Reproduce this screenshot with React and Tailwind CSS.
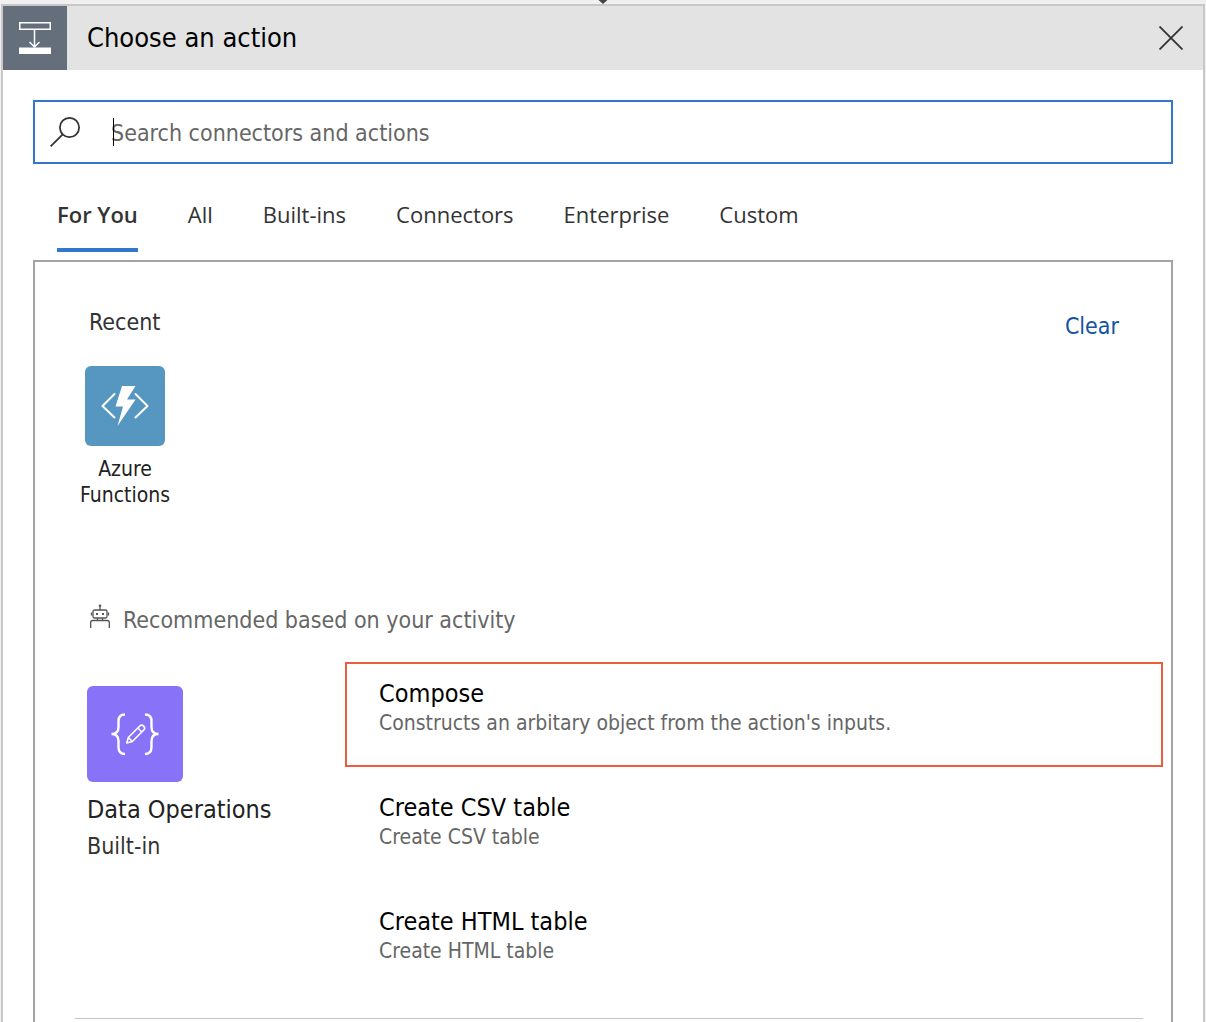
import { useState } from "react";

const tabs = ["For You", "All", "Built-ins", "Connectors", "Enterprise", "Custom"];

const actions = [
  { title: "Compose", description: "Constructs an arbitary object from the action's inputs.", highlighted: true },
  { title: "Create CSV table", description: "Create CSV table" },
  { title: "Create HTML table", description: "Create HTML table" },
];

function InsertStepIcon() {
  return (
    <svg width="32" height="32" viewBox="0 0 32 32" fill="none" stroke="#fff" aria-hidden="true">
      <rect x="0.75" y="0.75" width="30.5" height="6.5" strokeWidth="1.5" />
      <path d="M15.5 8v17M10.5 20l5 5 5-5" strokeWidth="1.5" />
      <path d="M0 25.5h32V32H0z" fill="#fff" stroke="none" />
    </svg>
  );
}

function CloseIcon() {
  return (
    <svg width="24" height="24" viewBox="0 0 24 24" stroke="#333" strokeWidth="1.8" aria-hidden="true">
      <path d="M0.5 0.5l23 23M23.5 0.5l-23 23" />
    </svg>
  );
}

function SearchIcon() {
  return (
    <svg width="30" height="30" viewBox="0 0 30 30" fill="none" stroke="#333" strokeWidth="1.8" aria-hidden="true">
      <circle cx="19.5" cy="10.5" r="9.6" />
      <path d="M12.7 17.3L0.6 29.4" />
    </svg>
  );
}

function FunctionsIcon() {
  return (
    <svg width="80" height="80" viewBox="0 0 80 80" fill="none" aria-hidden="true">
      <path d="M29.5 28L17.5 40l12 11.5M50.5 28L62.5 40l-12 11.5" stroke="#fff" strokeWidth="2" strokeLinecap="round" strokeLinejoin="round" />
      <path d="M37 20h13.5L42 33.500h8.500L32.500 60l5.500-19.500h-7.500z" fill="#fff" />
    </svg>
  );
}

function DataOperationsIcon() {
  return (
    <svg width="96" height="96" viewBox="0 0 96 96" fill="none" stroke="#fff" aria-hidden="true">
      <path
        d="M38 28.5c-5 0-6.500 2.500-6.500 6.500v6c0 4-2 7-7 7 5 0 7 3 7 7v6c0 4 1.500 7 6.500 7M58 28.500c5 0 6.500 2.500 6.500 6.500v6c0 4 2 7 7 7-5 0-7 3-7 7v6c0 4-1.500 7-6.500 7"
        strokeWidth="2.4"
      />
      <path d="M39.8 57l1.500-5.500 11.500-11.500c2.500-2.500 6.500 1.500 4 4L45.300 55.500zM41.300 51.500l4 4M50.800 42l4 4" strokeWidth="1.6" strokeLinejoin="round" />
    </svg>
  );
}

function RobotIcon() {
  return (
    <svg width="20" height="24" viewBox="0 0 20 24" fill="none" stroke="#555" strokeWidth="1.3" aria-hidden="true">
      <rect x="3" y="6" width="14" height="8" rx="1.5" />
      <path d="M10 1.500v5M1.500 8.500v3M18.500 8.500v3M7.500 14v2.500M12.500 14v2.500M0.700 24v-5.500q0-2 2-2h14.600q2 0 2 2V24" />
      <circle cx="10" cy="1.8" r="1.3" fill="#555" stroke="none" />
      <path d="M6 9h2v2H6zM12 9h2v2h-2z" fill="#555" stroke="none" />
    </svg>
  );
}

export default function App() {
  const [active, setActive] = useState("For You");
  const [query, setQuery] = useState("");

  return (
    <div className="flex min-h-screen flex-col bg-[#f0f0f0] px-px font-['DejaVu_Sans_Condensed','Noto_Sans',sans-serif] text-[#333]">
      <div className="flex h-1 justify-center overflow-hidden">
        <svg width="10" height="4" viewBox="0 0 10 4" aria-hidden="true">
          <path d="M0.5 0h9L5 4z" fill="#444" />
        </svg>
      </div>
      <section aria-labelledby="panel-title" className="flex flex-1 flex-col border-2 border-b-0 border-[#c8c8c8] bg-white">
        <header className="flex h-16 items-center bg-[#e3e3e3]">
          <div className="flex size-16 items-center justify-center bg-[#646f7b]">
            <InsertStepIcon />
          </div>
          <h1 id="panel-title" className="ml-5 flex-1 text-[27px] leading-8 text-black">Choose an action</h1>
          <button type="button" aria-label="Close" className="mr-5">
            <CloseIcon />
          </button>
        </header>

        <div className="flex flex-1 flex-col px-[30px] pt-[30px]">
          <label className="relative flex h-16 items-center border-2 border-[#3277cb] pl-[15px]">
            <SearchIcon />
            <span className="absolute left-[78px] h-7 w-px bg-black" />
            <input
              type="text"
              aria-label="Search connectors and actions"
              placeholder="Search connectors and actions"
              value={query}
              onChange={(e) => setQuery(e.target.value)}
              className="ml-[31px] h-full min-w-0 flex-1 pt-0.5 text-[23px] caret-transparent outline-none placeholder:text-[#666]"
            />
          </label>

          <div role="tablist" className="ml-6 mt-[30px] flex gap-[50px] font-['Open_Sans',sans-serif] text-[22px] leading-10">
            {tabs.map((tab) => (
              <button
                key={tab}
                type="button"
                role="tab"
                aria-selected={tab === active}
                onClick={() => setActive(tab)}
                className={tab === active ? "h-[58px] border-b-4 border-[#3277cb] pb-4 font-semibold" : "h-[58px] border-b-4 border-transparent pb-4"}
              >
                {tab}
              </button>
            ))}
          </div>

          <div className="mt-2 flex-1 border-2 border-b-0 border-[#a3a3a3] px-10">
            <div className="flex items-center justify-between pl-3.5 pr-3 pt-10">
              <h2 className="text-[23px] leading-8">Recent</h2>
              <button type="button" className="mt-2 text-[23px] leading-8 text-[#1353a2]">Clear</button>
            </div>
            <button type="button" className="mt-6 flex w-[100px] flex-col items-center text-[21px] leading-[26px] text-[#222]">
              <span className="mb-2.5 rounded-md bg-[#5597c1]">
                <FunctionsIcon />
              </span>
              Azure Functions
            </button>

            <h2 className="mt-24 flex items-start gap-[13px] pl-[15px] text-[23px] leading-8 text-[#666]">
              <RobotIcon />
              Recommended based on your activity
            </h2>

            <div className="-mr-8 mt-[26px] flex">
              <div className="ml-3 mt-6 w-[258px]">
                <div className="size-24 rounded-md bg-[#8872f7]">
                  <DataOperationsIcon />
                </div>
                <h3 className="mt-2.5 text-[25px] leading-9 text-[#222]">Data Operations</h3>
                <p className="text-[23px] leading-9">Built-in</p>
              </div>
              <ul className="flex-1">
                {actions.map((action) => (
                  <li key={action.title} className="mb-[9px]">
                    <button
                      type="button"
                      className={
                        action.highlighted
                          ? "flex h-[105px] w-full flex-col border-2 border-[#ec5d40] px-8 pt-3.5 text-left"
                          : "flex h-[105px] w-full flex-col border-2 border-transparent px-8 pt-3.5 text-left"
                      }
                    >
                      <span className="text-[25px] leading-8 text-black">{action.title}</span>
                      <span className="text-[21px] leading-[26px] text-[#666]">{action.description}</span>
                    </button>
                  </li>
                ))}
              </ul>
            </div>
            <hr className="-mr-3 mt-3.5 border-[#c4c4c4]" />
          </div>
        </div>
      </section>
    </div>
  );
}
